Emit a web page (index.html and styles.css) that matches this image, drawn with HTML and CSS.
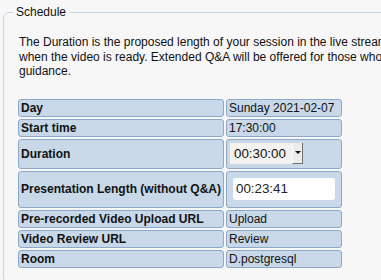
FILE: index.html
```html
<!DOCTYPE html>
<html>
<head>
    <title>Schedule</title>
    <link rel="stylesheet" href="styles.css">
</head>
<body>
    <fieldset class="schedule">
        <legend>Schedule</legend>
        <p class="intro">
            The Duration is the proposed length of your session in the live stream. The Presentation Length is updated<br>
            when the video is ready. Extended Q&amp;A will be offered for those who have time left over, ask the hosts for<br>
            guidance.
        </p>

        <table class="details">
            <tr>
                <td class="label">Day</td>
                <td class="value">Sunday 2021-02-07</td>
            </tr>
            <tr>
                <td class="label">Start time</td>
                <td class="value">17:30:00</td>
            </tr>
            <tr>
                <td class="label">Duration</td>
                <td class="value">
                    <div class="select">
                        <span class="select-text">00:30:00</span>
                        <span class="select-arrow"></span>
                    </div>
                </td>
            </tr>
            <tr>
                <td class="label">Presentation Length (without Q&amp;A)</td>
                <td class="value"><input type="text" class="length" value="00:23:41"></td>
            </tr>
            <tr>
                <td class="label">Pre-recorded Video Upload URL</td>
                <td class="value">Upload</td>
            </tr>
            <tr>
                <td class="label">Video Review URL</td>
                <td class="value">Review</td>
            </tr>
            <tr>
                <td class="label">Room</td>
                <td class="value">D.postgresql</td>
            </tr>
        </table>
    </fieldset>
</body>
</html>
```

FILE: styles.css
```css
html, body {
    overflow: hidden;
}
body {
    font-family: 'Liberation Sans', Arial, sans-serif;
    font-size: 12px;
    background-color: #f7f7f7;
    color: #111;
    margin: 0;
}
.schedule {
    width: 620px;
    margin: 5px 0 0 3px;
    padding: 0 9px 12px 9px;
    border: 1px solid #c6d6e8;
    border-radius: 6px;
}
.schedule legend {
    padding: 0 3px;
    line-height: 14px;
}
.intro {
    margin: 16px 0 0 6px;
    line-height: 14.5px;
}
.details {
    margin: 18px 0 0 3px;
    border-spacing: 2px;
}
.details td {
    background-color: #c8d8e8;
    border: 1px solid #8ea9c8;
    border-radius: 3px;
    padding: 1px 2px;
    line-height: 14px;
}
.details .label {
    width: 200px;
    font-weight: bold;
}
.details .value {
    width: 110px;
}
.select {
    display: flex;
    width: 73px;
    height: 21px;
    margin: 2px 0 3px 1px;
    background-color: #f4f2ef;
    font-size: 13.33px;
}
.select-text {
    flex: 1;
    padding-left: 4px;
    line-height: 21px;
}
.select-arrow {
    position: relative;
    width: 9px;
    background-color: #ececec;
    border-left: 1px solid #fafafa;
    border-right: 1px solid #707070;
    border-bottom: 1px solid #707070;
}
.select-arrow::after {
    content: '';
    position: absolute;
    left: 2px;
    top: 8px;
    border-left: 3px solid transparent;
    border-right: 3px solid transparent;
    border-top: 3px solid #111;
}
.length {
    display: block;
    width: 102px;
    height: 22px;
    margin: 5px 0 6px 4px;
    padding: 0 3px;
    border: none;
    border-radius: 3px;
    background-color: #fff;
    font-family: 'Liberation Sans', Arial, sans-serif;
    font-size: 13.33px;
    color: #222;
    box-sizing: border-box;
}
```
